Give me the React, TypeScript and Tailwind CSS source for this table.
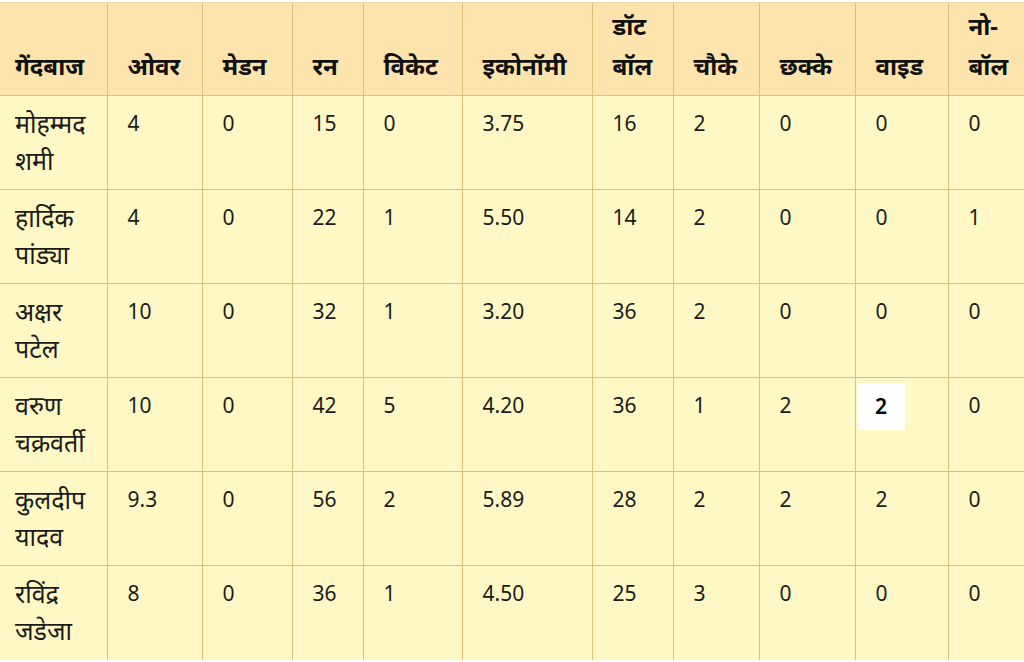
// Bowling scorecard table (Hindi)

const columns = [
  { label: ['गेंदबाज'], width: 'w-[107px]' },
  { label: ['ओवर'], width: 'w-[95px]' },
  { label: ['मेडन'], width: 'w-[90px]' },
  { label: ['रन'], width: 'w-[71px]' },
  { label: ['विकेट'], width: 'w-[99px]' },
  { label: ['इकोनॉमी'], width: 'w-[130px]' },
  { label: ['डॉट', 'बॉल'], width: 'w-[81px]' },
  { label: ['चौके'], width: 'w-[86px]' },
  { label: ['छक्के'], width: 'w-[96px]' },
  { label: ['वाइड'], width: 'w-[93px]' },
  { label: ['नो-', 'बॉल'], width: 'w-[76px]' },
];

const rows = [
  ['मोहम्मद शमी', '4', '0', '15', '0', '3.75', '16', '2', '0', '0', '0'],
  ['हार्दिक पांड्या', '4', '0', '22', '1', '5.50', '14', '2', '0', '0', '1'],
  ['अक्षर पटेल', '10', '0', '32', '1', '3.20', '36', '2', '0', '0', '0'],
  ['वरुण चक्रवर्ती', '10', '0', '42', '5', '4.20', '36', '1', '2', '2', '0'],
  ['कुलदीप यादव', '9.3', '0', '56', '2', '5.89', '28', '2', '2', '2', '0'],
  ['रविंद्र जडेजा', '8', '0', '36', '1', '4.50', '25', '3', '0', '0', '0'],
];

export default function App() {
  return (
    <div className="w-[1024px] h-[662px] overflow-hidden bg-white font-['Noto_Sans','Noto_Sans_Devanagari',sans-serif] text-[#1b1b1b]">
      <table className="mt-[2px] table-fixed border-collapse w-[1024px]">
        <colgroup>
          {columns.map((c) => (
            <col key={c.label.join('')} className={c.width} />
          ))}
        </colgroup>
        <thead>
          <tr className="h-[93px] bg-[#fde4ac]">
            {columns.map((c, i) => (
              <th
                key={c.label.join('')}
                className={`align-bottom text-left font-bold text-[24px] leading-[40px] pb-[9px] border-t border-[#f0d9a8] ${
                  i === 0 ? 'pl-[15px]' : 'pl-[20px] border-l border-l-[#e6bb78]'
                } pr-[4px] text-[#111]`}
              >
                {c.label.map((l) => (
                  <div key={l}>{l}</div>
                ))}
              </th>
            ))}
          </tr>
        </thead>
        <tbody>
          {rows.map((r, ri) => (
            <tr key={ri} className="h-[94px] bg-[#fff8c4]">
              {r.map((v, ci) => (
                <td
                  key={ci}
                  className={`align-top text-left leading-[37px] pt-[9px] border-t border-[#e6bb78] ${
                    ci === 0 ? 'pl-[15px] text-[25px]' : 'pl-[20px] border-l text-[21px]'
                  } pr-[4px]`}
                >
                  {ci === 0 ? (
                    v.split(' ').map((part) => (
                      <div key={part} className="whitespace-nowrap">
                        {part}
                      </div>
                    ))
                  ) : ri === 3 && ci === 9 ? (
                    <div className="-ml-[18px] -mt-[4px] w-[47px] h-[47px] bg-white flex items-center justify-center font-semibold text-black">
                      {v}
                    </div>
                  ) : (
                    v
                  )}
                </td>
              ))}
            </tr>
          ))}
        </tbody>
      </table>
    </div>
  );
}
